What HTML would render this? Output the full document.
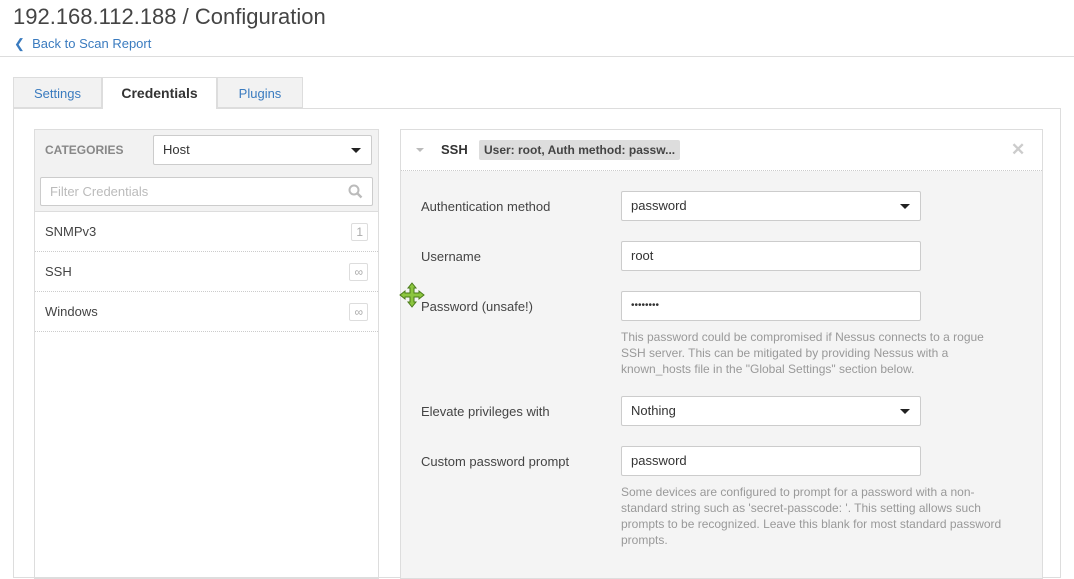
<!DOCTYPE html><html><head><style>
body{margin:0;width:1074px;height:569px;overflow:hidden;background:#fff;font-family:"Liberation Sans",sans-serif;color:#333;position:relative}
.a{position:absolute}
.inp{position:absolute;left:621px;width:289px;height:28px;border:1px solid #ccc;border-radius:2px;background:#fff;font-size:13px;line-height:28px;padding-left:9px;box-sizing:content-box;color:#333}
.car{position:absolute;right:10px;top:12px;border-left:5px solid transparent;border-right:5px solid transparent;border-top:5px solid #222}
.lbl{position:absolute;left:421px;font-size:13px;color:#444}
.help{position:absolute;left:621px;width:385px;font-size:12px;line-height:16px;color:#999}
.row{position:absolute;left:35px;width:343px;height:40px;border-bottom:1px dotted #ccc;font-size:13px;line-height:40px;box-sizing:border-box;padding-left:10px;color:#444}
.badge{position:absolute;right:10px;top:11px;height:16px;border:1px solid #ddd;border-radius:2px;font-size:12px;line-height:16px;color:#aaa;padding:0 4px}
</style></head><body>
<div class="a" style="left:13px;top:4px;font-size:22px;color:#444;font-weight:300">192.168.112.188 / Configuration</div>
<div class="a" style="left:14px;top:36px;font-size:13px;color:#3a7bbf">&#10094;&nbsp; Back to Scan Report</div>
<div class="a" style="left:0;top:56px;width:1074px;height:1px;background:#ddd"></div>
<div class="a" style="left:13px;top:108px;width:1048px;height:470px;border:1px solid #ddd;box-sizing:border-box"></div>
<div class="a" style="left:13px;top:77px;width:89px;height:31px;background:#f2f2f2;border:1px solid #ddd;box-sizing:border-box;font-size:13px;color:#3a7bbf;text-align:center;line-height:31px">Settings</div>
<div class="a" style="left:102px;top:77px;width:115px;height:32px;background:#fff;border:1px solid #ddd;border-bottom:none;box-sizing:border-box;font-size:14px;font-weight:bold;color:#333;text-align:center;line-height:31px">Credentials</div>
<div class="a" style="left:217px;top:77px;width:86px;height:31px;background:#f2f2f2;border:1px solid #ddd;box-sizing:border-box;font-size:13px;color:#3a7bbf;text-align:center;line-height:31px">Plugins</div>
<div class="a" style="left:34px;top:129px;width:345px;height:450px;border:1px solid #ddd;box-sizing:border-box"></div>
<div class="a" style="left:35px;top:130px;width:343px;height:81px;background:#f2f2f2;border-bottom:1px solid #ddd"></div>
<div class="a" style="left:45px;top:143px;font-size:12px;font-weight:bold;color:#888">CATEGORIES</div>
<div class="inp" style="left:153px;top:135px;width:208px;height:28px">Host<div class="car"></div></div>
<div class="inp" style="left:40px;top:177px;width:322px;height:27px;color:#bbb">Filter Credentials
<svg style="position:absolute;right:9px;top:6px" width="15" height="15" viewBox="0 0 15 15"><circle cx="6" cy="6" r="4.5" fill="none" stroke="#bbb" stroke-width="2"/><path d="M9.5 9.5L13.5 13.5" stroke="#bbb" stroke-width="2.4"/></svg></div>
<div class="row" style="top:212px">SNMPv3<span class="badge">1</span></div>
<div class="row" style="top:252px">SSH<span class="badge">∞</span></div>
<div class="row" style="top:292px">Windows<span class="badge">∞</span></div>
<div class="a" style="left:400px;top:129px;width:643px;height:450px;border:1px solid #ddd;box-sizing:border-box;background:#f4f4f4"></div>
<div class="a" style="left:401px;top:130px;width:641px;height:40px;background:#fff;border-bottom:1px dotted #ccc"></div>
<div class="a" style="left:416px;top:148px;border-left:4px solid transparent;border-right:4px solid transparent;border-top:4px solid #bbb"></div>
<div class="a" style="left:441px;top:142px;font-size:13px;font-weight:bold;color:#333">SSH</div>
<div class="a" style="left:479px;top:140px;height:20px;padding:0 5px;background:#ddd;border-radius:2px;font-size:12px;font-weight:bold;line-height:20px;color:#444">User: root, Auth method: passw...</div>
<div class="a" style="left:1011px;top:140px;font-size:17px;font-weight:bold;color:#ccc">✕</div>
<div class="lbl" style="top:199px">Authentication method</div>
<div class="inp" style="top:191px">password<div class="car"></div></div>
<div class="lbl" style="top:249px">Username</div>
<div class="inp" style="top:241px">root</div>
<div class="lbl" style="top:299px">Password (unsafe!)</div>
<div class="inp" style="top:291px;font-size:10px">••••••••</div>
<div class="help" style="top:329px">This password could be compromised if Nessus connects to a rogue SSH server. This can be mitigated by providing Nessus with a known_hosts file in the "Global Settings" section below.</div>
<div class="lbl" style="top:404px">Elevate privileges with</div>
<div class="inp" style="top:396px">Nothing<div class="car"></div></div>
<div class="lbl" style="top:454px">Custom password prompt</div>
<div class="inp" style="top:446px">password</div>
<div class="help" style="top:484px">Some devices are configured to prompt for a password with a non-standard string such as 'secret-passcode: '. This setting allows such prompts to be recognized. Leave this blank for most standard password prompts.</div>
<svg class="a" style="left:398px;top:281px" width="28" height="28" viewBox="0 0 28 28"><path d="M14 2L18 7H16V12H21V10L26 14L21 18V16H16V21H18L14 26L10 21H12V16H7V18L2 14L7 10V12H12V7H10Z" fill="#8cc63f" stroke="#4a7a1a" stroke-width="1"/></svg>
</body></html>
